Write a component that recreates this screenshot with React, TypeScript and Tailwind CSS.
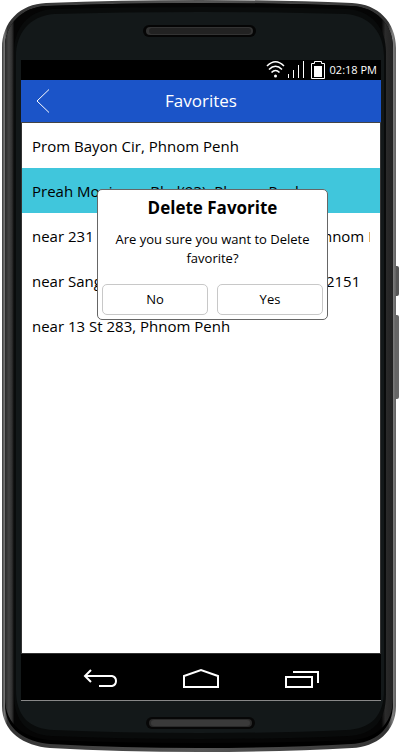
import React from "react";

const places = [
  "Prom Bayon Cir, Phnom Penh",
  "Preah Monivong Blvd(93), Phnom Penh",
  "near 231 Oknha Tep Phan Street (1820), Phnom Penh",
  "near Sangkat Tuol Svay Prey Thom, Street 2151",
  "near 13 St 283, Phnom Penh",
];

function DeviceFrame() {
  return (
    <svg
      className="absolute inset-0 h-full w-full"
      viewBox="0 0 400 752"
      preserveAspectRatio="none"
      aria-hidden="true"
    >
      <defs>
        <linearGradient id="rim" x1="0" x2="1" y1="0" y2="0">
          <stop offset="0" stopColor="#3a3a3a" />
          <stop offset="0.006" stopColor="#777777" />
          <stop offset="0.014" stopColor="#333333" />
          <stop offset="0.5" stopColor="#555555" />
          <stop offset="0.98" stopColor="#333333" />
          <stop offset="0.992" stopColor="#808080" />
          <stop offset="1" stopColor="#606060" />
        </linearGradient>
        <linearGradient id="side" x1="0" x2="1" y1="0" y2="0">
          <stop offset="0" stopColor="#2a2a2a" />
          <stop offset="0.01" stopColor="#444444" />
          <stop offset="0.018" stopColor="#303030" />
          <stop offset="0.024" stopColor="#050505" />
          <stop offset="0.97" stopColor="#050505" />
          <stop offset="0.98" stopColor="#2b2b2b" />
          <stop offset="1" stopColor="#222222" />
        </linearGradient>
      </defs>
      <rect x="394" y="266" width="5" height="30" rx="2" fill="#555555" />
      <rect x="394" y="315" width="5" height="84" rx="2" fill="#666666" />
      <path d="M2 48C2 22 20 4 46 3Q120 0 200 0Q280 0 352 3C378 4 396 22 396 48V706C396 732 376 747 352 748Q280 752 200 752Q120 752 50 748C24 746 2 732 2 706Z" fill="url(#rim)" />
      <path d="M5 48C5 24 22 7 47 6Q120 3 200 3Q280 3 351 6C376 7 393 24 393 48V704C393 730 374 743 351 744Q280 748 200 748Q120 748 50 744C26 742 5 730 5 704Z" fill="#000000" />
      <path d="M5 48C5 24 22 7 47 6Q120 3 200 3Q280 3 351 6C376 7 393 24 393 48V698C393 726 374 739 351 740Q280 743 200 743Q120 743 50 740C26 738 5 726 5 698Z" fill="url(#side)" />
      <path d="M14 52C14 28 28 11 52 9Q120 7 200 7Q280 7 348 9C372 11 386 28 386 52V694C386 722 372 735 348 736Q280 739 200 739Q120 739 52 736C28 735 14 722 14 694Z" fill="#090b0b" />
      <path d="M16 56C16 34 29 16 54 14Q120 12 200 12Q280 12 346 14C371 16 384 34 384 56V690C384 716 371 729 346 730Q280 733 200 733Q120 733 54 730C29 729 16 716 16 690Z" fill="#131819" />
      <rect x="143" y="25" width="113" height="12" rx="6" fill="#050505" />
      <rect x="146" y="27" width="107" height="8" rx="4" fill="#333333" />
      <rect x="149" y="28" width="102" height="6" rx="3" fill="#222222" />
      <rect x="146" y="717" width="109" height="12" rx="6" fill="#070707" />
      <rect x="149" y="719" width="103" height="8" rx="4" fill="#2a2a2a" />
      <rect x="151" y="720" width="99" height="6" rx="3" fill="#3a3a3a" />
    </svg>
  );
}

function StatusBar() {
  return (
    <div className="flex h-5 items-center justify-end bg-black pr-1 text-white">
      <svg className="h-5 w-[42px]" viewBox="0 0 42 20" fill="none" stroke="#ffffff" aria-hidden="true">
        <path d="M3 6Q11.500 -2.500 20 6M5 9.500Q11.500 3 18 9.500M7.500 12.500Q11.500 8.500 15.500 12.500" strokeWidth="1.600" />
        <circle cx="11.500" cy="16" r="1.500" fill="#ffffff" stroke="none" />
        <path d="M24.500 14V18M29.500 10V18M34.500 5V18M39.500 1V18" strokeWidth="1" />
      </svg>
      <svg className="mx-1 h-5 w-4" viewBox="0 0 16 20" aria-hidden="true">
        <path d="M4.500 3.500V1.500H11.500V3.500H14.500V18.500H1.500V3.500Z" fill="none" stroke="#ffffff" />
        <rect x="4" y="6" width="8" height="11" fill="#ffffff" />
      </svg>
      <span className="text-[11px] leading-5 whitespace-nowrap">02:18 PM</span>
    </div>
  );
}

export default function App() {
  return (
    <div className="relative flex min-h-screen w-full flex-col overflow-hidden bg-white pt-[60px] pr-[19px] pb-[51px] pl-[21px] font-['Open_Sans','Noto_Sans',sans-serif] text-black">
      <DeviceFrame />
      <div className="relative flex flex-1 flex-col">
        <StatusBar />
        <header className="grid h-[43px] grid-cols-[44px_1fr_44px] items-center border-b border-[#444444] bg-[#1b54c8] text-white">
          <button type="button" aria-label="Back" className="flex h-full items-center justify-center">
            <svg className="h-6 w-4" viewBox="0 0 16 24" fill="none" stroke="#ffffff" aria-hidden="true">
              <path d="M14 0.500L2 12L14 23.500" />
            </svg>
          </button>
          <h1 className="text-center text-[17px] leading-6">Favorites</h1>
        </header>
        <main className="flex-1 border-x border-[#333333] bg-white">
          <ul>
            {places.map((place, i) => (
              <li key={place} className={i === 1 ? "bg-[#40c6dc]" : ""}>
                <button
                  type="button"
                  className="block h-[45px] w-full overflow-hidden px-[10px] text-left text-[15px] leading-6 whitespace-nowrap"
                >
                  <span className="block overflow-hidden">{place}</span>
                </button>
              </li>
            ))}
          </ul>
        </main>
        <nav className="flex h-12 items-center justify-around border-t border-b border-t-[#333333] border-b-[#888888] bg-black px-[29px]">
          <button type="button" aria-label="Go back">
            <svg className="h-6 w-9" viewBox="0 0 36 24" fill="none" stroke="#ffffff" strokeWidth="2" aria-hidden="true">
              <path d="M9 5L3 11L9 17M3 11H30Q34 12 34 16Q34 20 30 21H17" />
            </svg>
          </button>
          <button type="button" aria-label="Home">
            <svg className="h-6 w-9" viewBox="0 0 36 24" fill="none" stroke="#ffffff" strokeWidth="2" aria-hidden="true">
              <path d="M1 22V11L18 5L35 11V22Z" />
            </svg>
          </button>
          <button type="button" aria-label="Recent apps">
            <svg className="h-6 w-9" viewBox="0 0 36 24" fill="none" stroke="#ffffff" strokeWidth="2" aria-hidden="true">
              <path d="M2 12H28V22H2ZM9 7H34V18" />
            </svg>
          </button>
        </nav>
        <div
          role="dialog"
          aria-labelledby="dialog-title"
          className="absolute top-[129px] left-[76px] w-[231px] rounded-[5px] border border-[#666666] bg-white px-1 pt-[6px] pb-1"
        >
          <h2 id="dialog-title" className="text-center text-[17px] leading-6 font-bold">
            Delete Favorite
          </h2>
          <p className="px-2 pt-[10px] text-center text-[13px] leading-[19px]">
            Are you sure you want to Delete favorite?
          </p>
          <div className="mt-4 grid grid-cols-2 gap-[9px]">
            <button type="button" className="h-[31px] rounded-[5px] border border-[#c8c8c8] text-[13px]">
              No
            </button>
            <button type="button" className="h-[31px] rounded-[5px] border border-[#c8c8c8] text-[13px]">
              Yes
            </button>
          </div>
        </div>
      </div>
    </div>
  );
}
